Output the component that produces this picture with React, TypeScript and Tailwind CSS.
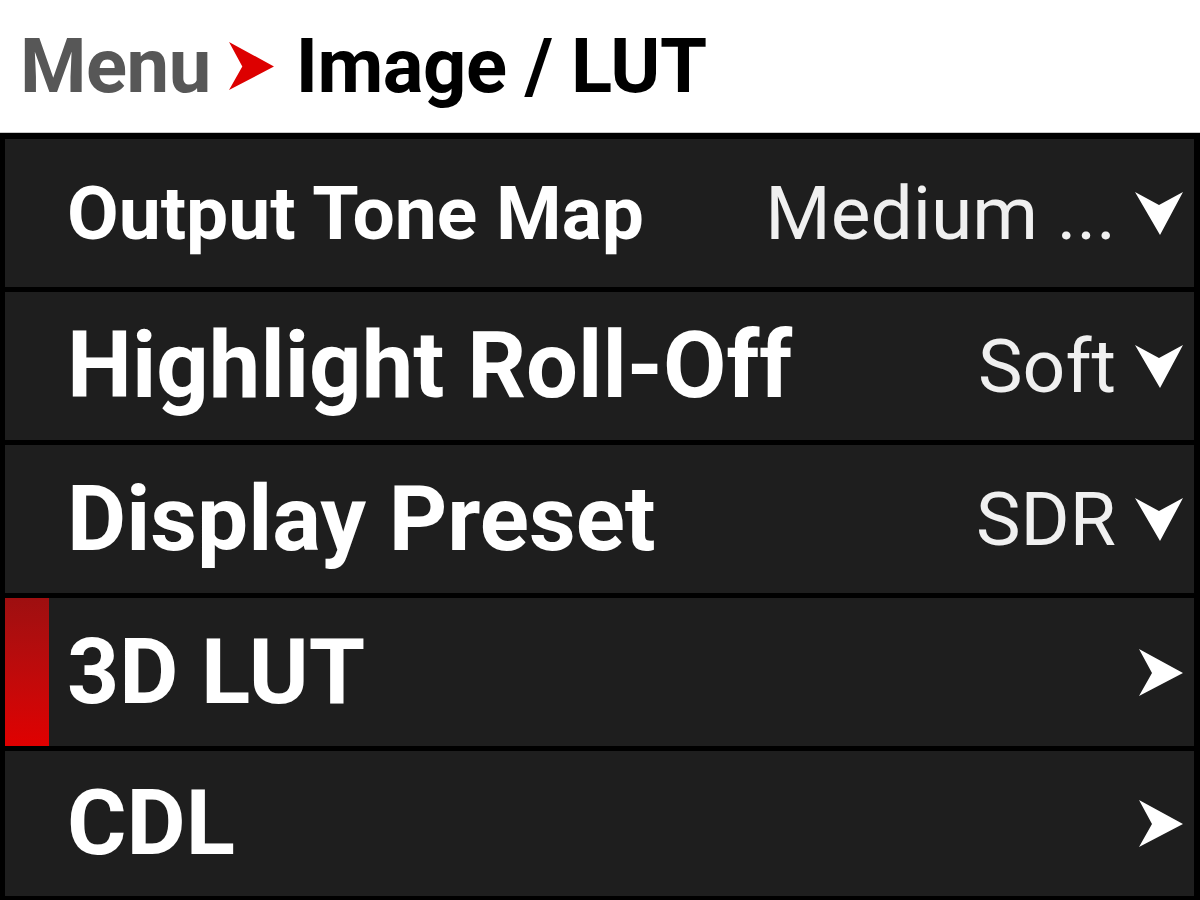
import React from "react";

const RightArrow = ({ color, w, h }: { color: string; w: number; h: number }) => (
  <svg width={w} height={h} viewBox="0 0 44 47" className="block shrink-0">
    <polygon points="0,0 44,24 0,47 13,24" fill={color} />
  </svg>
);

const DownArrow = () => (
  <svg width={48} height={43} viewBox="0 0 48 43" className="block shrink-0">
    <polygon points="0,0 24,13 48,0 25,43" fill="#ffffff" />
  </svg>
);

type Row = {
  label: string;
  labelSize: string;
  value?: string;
  kind: "select" | "nav";
  active?: boolean;
};

const rows: Row[] = [
  { label: "Output Tone Map", labelSize: "text-[75px]", value: "Medium ...", kind: "select" },
  { label: "Highlight Roll-Off", labelSize: "text-[92px]", value: "Soft", kind: "select" },
  { label: "Display Preset", labelSize: "text-[91px]", value: "SDR", kind: "select" },
  { label: "3D LUT", labelSize: "text-[91px]", kind: "nav", active: true },
  { label: "CDL", labelSize: "text-[91px]", kind: "nav" },
];

export default function App() {
  return (
    <div className="w-[1200px] h-[900px] bg-white flex flex-col font-['Roboto',sans-serif] overflow-hidden">
      <div className="h-[133px] shrink-0 flex items-center pl-[20px] border-b border-[#c8c8c8]">
        <span className="text-[76px] font-bold text-[#575757] leading-none tracking-[-0.5px]">Menu</span>
        <span className="ml-[17px] mr-[21px]">
          <RightArrow color="#dd0000" w={47} h={48} />
        </span>
        <span className="text-[76px] font-bold text-black leading-none tracking-[-0.5px]">Image / LUT</span>
      </div>
      <div className="flex-1 bg-black pt-[6px] pb-[4px] pl-[5px] pr-[6px] flex flex-col gap-[5px]">
        {rows.map((r, i) => (
          <div
            key={r.label}
            className={`${i < 4 ? "h-[148px] shrink-0" : "flex-1"} bg-[#1e1e1e] flex items-center`}
          >
            {r.active ? (
              <div className="w-[44px] self-stretch bg-gradient-to-b from-[#9e0f10] to-[#e00000]" />
            ) : (
              <div className="w-[44px]" />
            )}
            <span className={`ml-[18px] ${r.labelSize} font-bold text-white leading-none whitespace-nowrap`}>
              {r.label}
            </span>
            <div className="flex-1" />
            {r.kind === "select" ? (
              <div className="flex items-center">
                <span className="text-[75px] text-[#f0f0f0] leading-none whitespace-nowrap">{r.value}</span>
                <span className="ml-[19px] mr-[11px]">
                  <DownArrow />
                </span>
              </div>
            ) : (
              <span className="mr-[11px]">
                <RightArrow color="#ffffff" w={44} h={47} />
              </span>
            )}
          </div>
        ))}
      </div>
    </div>
  );
}
